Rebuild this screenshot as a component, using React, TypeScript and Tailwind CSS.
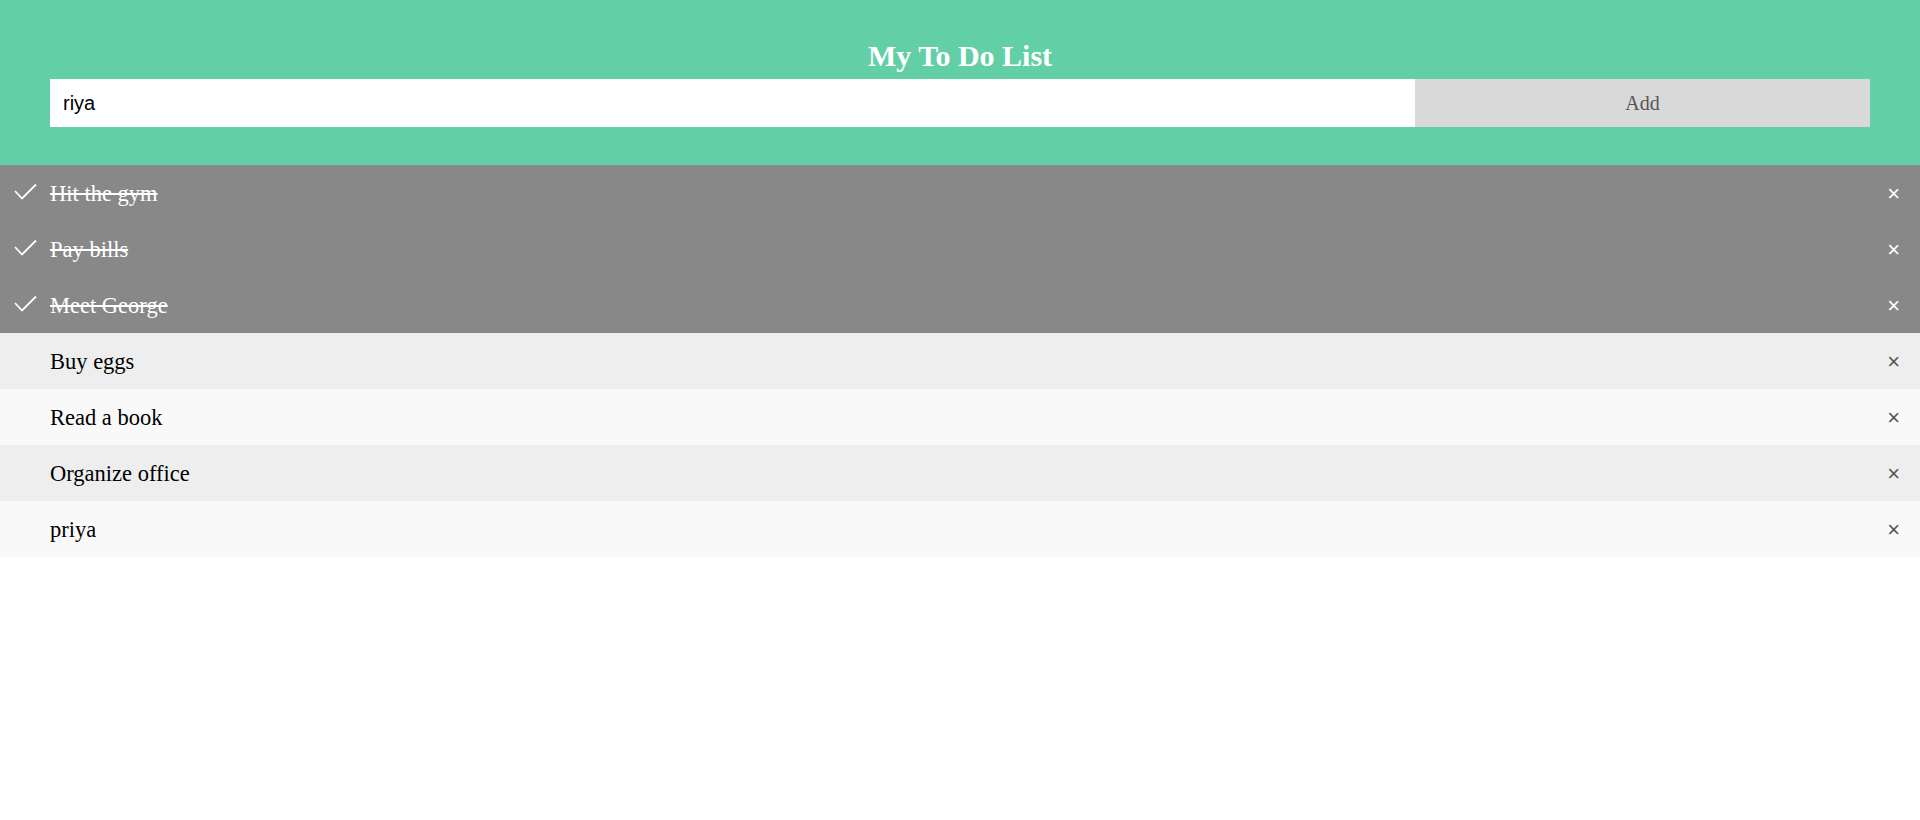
import { useState } from "react";

type Item = { text: string; done: boolean };

const initial: Item[] = [
  { text: "Hit the gym", done: true },
  { text: "Pay bills", done: true },
  { text: "Meet George", done: true },
  { text: "Buy eggs", done: false },
  { text: "Read a book", done: false },
  { text: "Organize office", done: false },
  { text: "priya", done: false },
];

const serif = "font-['Liberation_Serif','Times_New_Roman',serif]";
const sans = "font-['Liberation_Sans',Arial,sans-serif]";

export default function App() {
  const [items, setItems] = useState<Item[]>(initial);
  const [value, setValue] = useState("riya");

  const add = () => {
    if (!value.trim()) return;
    setItems([...items, { text: value, done: false }]);
    setValue("");
  };

  return (
    <div className={`min-h-screen bg-white ${serif}`}>
      {/* Header */}
      <div className="bg-[#62cfa6] px-[50px] pt-[39px] pb-[38px] text-center">
        <h2 className="mb-[6px] text-[30px] leading-[34px] font-bold text-white">My To Do List</h2>
        <div className="flex">
          <input
            value={value}
            onChange={(e) => setValue(e.target.value)}
            className={`h-[48px] w-3/4 bg-white px-[13px] text-[20px] text-black outline-none ${sans}`}
          />
          <button
            onClick={add}
            className="h-[48px] w-1/4 bg-[#d9d9d9] text-[20px] text-[#555]"
          >
            Add
          </button>
        </div>
      </div>

      {/* List */}
      <ul>
        {items.map((it, i) => (
          <li
            key={i}
            onClick={() => setItems(items.map((x, j) => (j === i ? { ...x, done: !x.done } : x)))}
            className={`relative flex h-[56px] cursor-pointer items-center pt-[1px] pl-[50px] text-[22.5px] ${
              it.done
                ? "bg-[#888] text-white line-through"
                : i % 2 === 1
                ? "bg-[#eee] text-black"
                : "bg-[#f9f9f9] text-black"
            }`}
          >
            {it.done && (
              <svg className="absolute left-[13px] top-[18px]" width="26" height="18" viewBox="0 0 26 18">
                <polyline points="2,8 9,15.5 23,1.5" fill="none" stroke="white" strokeWidth="1.8" />
              </svg>
            )}
            {it.text}
            <span
              onClick={(e) => {
                e.stopPropagation();
                setItems(items.filter((_, j) => j !== i));
              }}
              className={`absolute right-0 top-0 flex h-[56px] items-center px-[20px] text-[22px] no-underline ${sans} ${
                it.done ? "text-white" : "text-[#555]"
              }`}
            >
              {"\u00D7"}
            </span>
          </li>
        ))}
      </ul>
    </div>
  );
}
